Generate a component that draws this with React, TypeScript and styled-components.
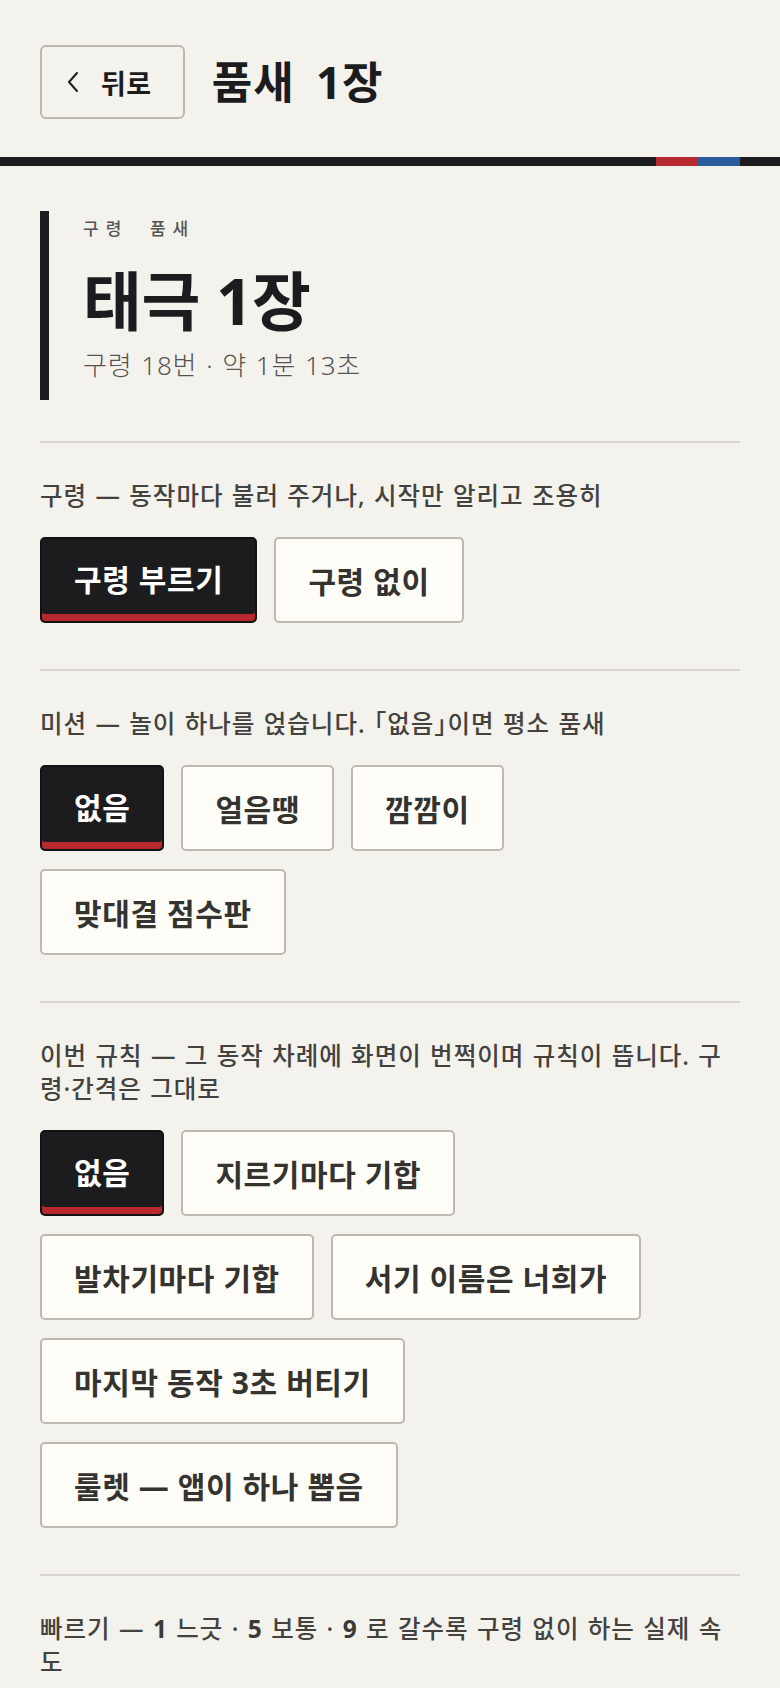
import styled, { createGlobalStyle, css } from 'styled-components';

const INK = '#1c1c1f';
const RED = '#b8282f';
const BLUE = '#2a5b9c';
const RULE = '#d9d6cf';

const GlobalStyle = createGlobalStyle`
  html, body {
    margin: 0;
    padding: 0;
    background: #f4f2ec;
  }
  body {
    font-family: "Noto Sans", "Noto Sans CJK KR", sans-serif;
    color: ${INK};
    -webkit-font-smoothing: antialiased;
  }
  * {
    box-sizing: border-box;
  }
`;

const Page = styled.div`
  width: 780px;
  min-height: 1688px;
  background: #f4f2ec;
`;

const Header = styled.header`
  display: flex;
  align-items: center;
  gap: 27px;
  padding: 45px 40px 38px;
`;

const BackButton = styled.button`
  display: flex;
  align-items: center;
  gap: 22px;
  height: 74px;
  padding: 0 31px 0 24px;
  border: 2px solid #bdb8ae;
  border-radius: 6px;
  background: transparent;
  font-family: inherit;
  font-size: 27px;
  font-weight: 700;
  letter-spacing: 0.5px;
  color: ${INK};
  cursor: pointer;
`;

const PageTitle = styled.h1`
  margin: 0;
  font-size: 44px;
  font-weight: 700;
  letter-spacing: 1px;
  word-spacing: 0.2em;
  line-height: 1.2;
`;

const Stripe = styled.div`
  display: flex;
  height: 9px;
`;

const StripePart = styled.span<{ $color: string; $width?: number }>`
  background: ${({ $color }) => $color};
  ${({ $width }) =>
    $width
      ? css`
          flex: 0 0 ${$width}px;
        `
      : css`
          flex: 1;
        `}
`;

const Main = styled.main`
  padding: 45px 40px 0;
`;

const Hero = styled.section`
  border-left: 9px solid ${INK};
  padding: 6px 0 19px 34px;
  margin-bottom: 41px;
`;

const Eyebrow = styled.div`
  font-size: 17px;
  font-weight: 500;
  line-height: 24px;
  letter-spacing: 7px;
  word-spacing: 0.6em;
  color: #555452;
`;

const HeroTitle = styled.h2`
  margin: 27px 0 0;
  font-size: 64px;
  font-weight: 700;
  line-height: 66px;
  letter-spacing: -0.5px;
`;

const Meta = styled.div`
  margin-top: 15px;
  font-size: 26px;
  font-weight: 300;
  line-height: 32px;
  letter-spacing: 0.8px;
  word-spacing: 0.05em;
  color: #555452;
`;

const Section = styled.section`
  border-top: 2px solid ${RULE};
  padding: 36px 0 46px;
`;

const Label = styled.p`
  margin: 0 0 25px;
  font-size: 24.5px;
  font-weight: 500;
  line-height: 33px;
  letter-spacing: 1px;
  word-spacing: 1px;
  color: #43423f;

  strong {
    font-weight: 700;
    color: #3a3937;
  }
`;

const Bracket = styled.span`
  font-feature-settings: 'halt' 1;
`;

const Options = styled.div`
  display: flex;
  flex-wrap: wrap;
  gap: 18px 17px;
`;

const Option = styled.button<{ $active?: boolean }>`
  height: 86px;
  padding: 0 32px;
  border: 2px solid #bdb9b1;
  border-radius: 5px;
  background: #fffdf8;
  font-family: inherit;
  font-size: 30px;
  font-weight: 700;
  letter-spacing: 0.6px;
  color: #34332f;
  cursor: pointer;

  ${({ $active }) =>
    $active &&
    css`
      background: ${INK};
      border-color: #121214;
      color: #ffffff;
      box-shadow: inset 0 -7px 0 ${RED};
      padding-bottom: 4px;
    `}
`;

const Chevron = () => (
  <svg width="13" height="22" viewBox="0 0 13 22" fill="none">
    <path d="M11 2 L3 11 L11 20" stroke={INK} strokeWidth="2" strokeLinecap="round" strokeLinejoin="round" />
  </svg>
);

const cueOptions = ['구령 부르기', '구령 없이'];
const missionOptions = ['없음', '얼음땡', '깜깜이', '맞대결 점수판'];
const ruleOptions = [
  '없음',
  '지르기마다 기합',
  '발차기마다 기합',
  '서기 이름은 너희가',
  '마지막 동작 3초 버티기',
  '룰렛 — 앱이 하나 뽑음',
];

const App = () => {
  return (
    <Page>
      <GlobalStyle />
      <Header>
        <BackButton>
          <Chevron />
          뒤로
        </BackButton>
        <PageTitle>품새 1장</PageTitle>
      </Header>
      <Stripe>
        <StripePart $color={INK} />
        <StripePart $color={RED} $width={42} />
        <StripePart $color={BLUE} $width={42} />
        <StripePart $color={INK} $width={40} />
      </Stripe>
      <Main>
        <Hero>
          <Eyebrow>구령 품새</Eyebrow>
          <HeroTitle>태극 1장</HeroTitle>
          <Meta>구령 18번 · 약 1분 13초</Meta>
        </Hero>

        <Section>
          <Label>구령 — 동작마다 불러 주거나, 시작만 알리고 조용히</Label>
          <Options>
            {cueOptions.map((o, i) => (
              <Option key={o} $active={i === 0}>
                {o}
              </Option>
            ))}
          </Options>
        </Section>

        <Section>
          <Label>
            미션 — 놀이 하나를 얹습니다. <Bracket>「없음」</Bracket>이면 평소 품새
          </Label>
          <Options>
            {missionOptions.map((o, i) => (
              <Option key={o} $active={i === 0}>
                {o}
              </Option>
            ))}
          </Options>
        </Section>

        <Section>
          <Label>이번 규칙 — 그 동작 차례에 화면이 번쩍이며 규칙이 뜹니다. 구령·간격은 그대로</Label>
          <Options>
            {ruleOptions.map((o, i) => (
              <Option key={o} $active={i === 0}>
                {o}
              </Option>
            ))}
          </Options>
        </Section>

        <Section>
          <Label>
            빠르기 — <strong>1</strong> 느긋 · <strong>5</strong> 보통 · <strong>9</strong> 로 갈수록 구령 없이 하는
            실제 속도
          </Label>
        </Section>
      </Main>
    </Page>
  );
};

export default App;
